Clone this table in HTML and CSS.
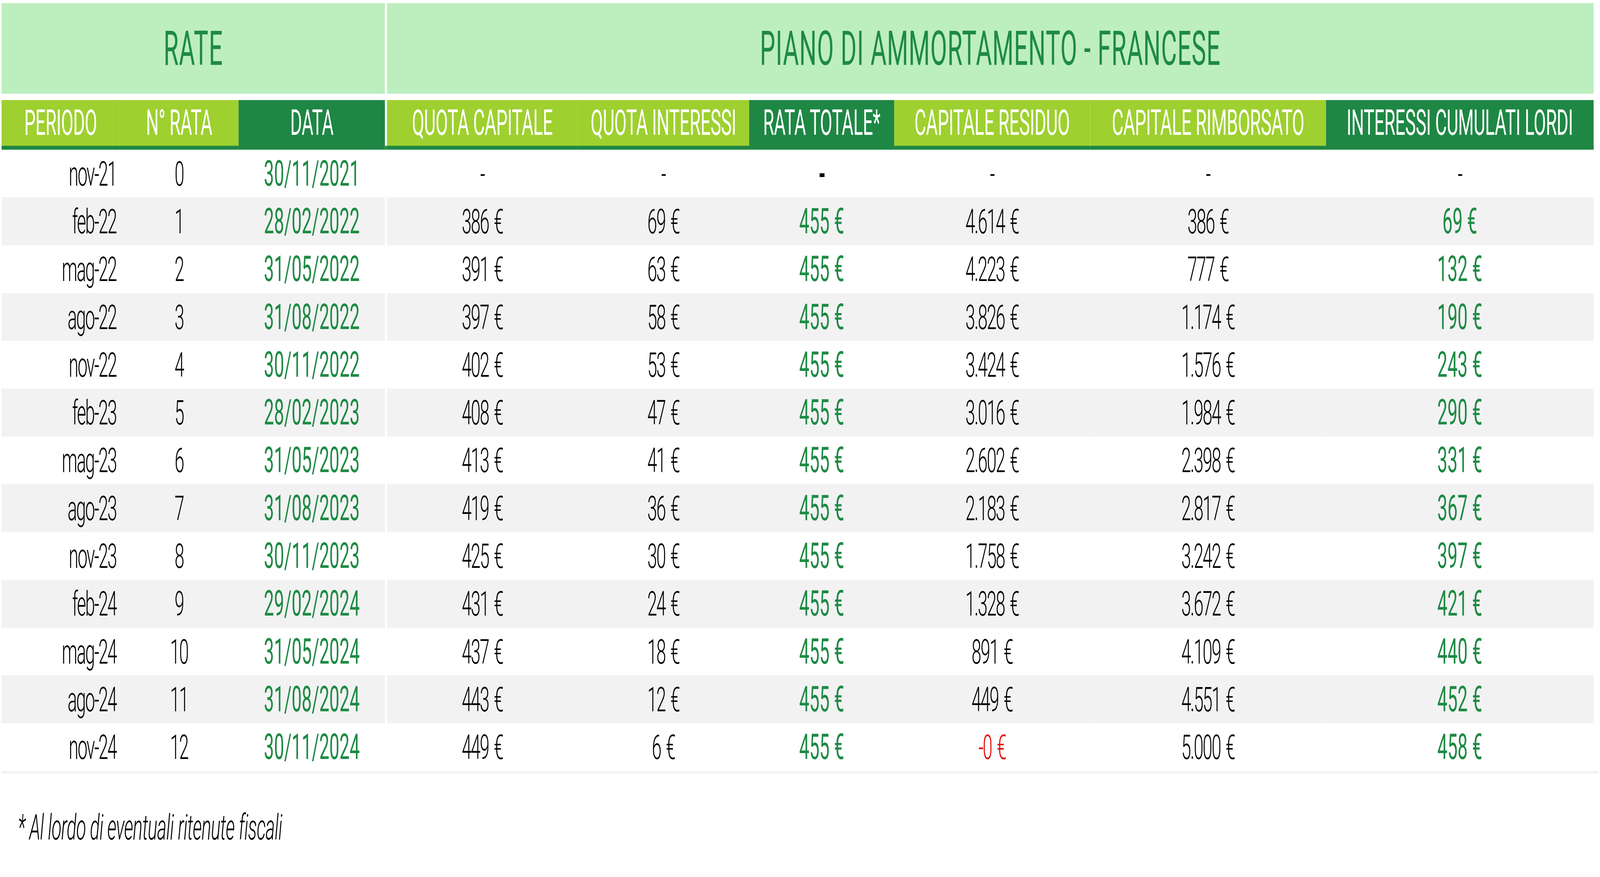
FILE: index.html
```html
<!DOCTYPE html>
<html lang="it">
<head>
<meta charset="utf-8">
<title>Piano di ammortamento</title>
<link rel="stylesheet" href="styles.css">
</head>
<body>
<div class="frame">
<div class="page">
  <div class="grid title-row">
    <div class="title span3">RATE</div>
    <div class="gap"></div>
    <div class="title span6">PIANO DI AMMORTAMENTO - FRANCESE</div>
  </div>
  <div class="grid head-row">
    <div class="h lime">PERIODO</div>
    <div class="h lime">N° RATA</div>
    <div class="h dark">DATA</div>
    <div class="gap hgap"></div>
    <div class="h lime">QUOTA CAPITALE</div>
    <div class="h lime">QUOTA INTERESSI</div>
    <div class="h dark">RATA TOTALE*</div>
    <div class="h lime">CAPITALE RESIDUO</div>
    <div class="h lime">CAPITALE RIMBORSATO</div>
    <div class="h dark">INTERESSI CUMULATI LORDI</div>
  </div>
  <div class="body">
    <div class="grid row"><div class="c per">nov-21</div><div class="c">0</div><div class="c g">30/11/2021</div><div class="gap"></div><div class="c">-</div><div class="c">-</div><div class="c b">-</div><div class="c">-</div><div class="c">-</div><div class="c">-</div></div>
    <div class="grid row"><div class="c per">feb-22</div><div class="c">1</div><div class="c g">28/02/2022</div><div class="gap"></div><div class="c">386 €</div><div class="c">69 €</div><div class="c g">455 €</div><div class="c">4.614 €</div><div class="c">386 €</div><div class="c g">69 €</div></div>
    <div class="grid row"><div class="c per">mag-22</div><div class="c">2</div><div class="c g">31/05/2022</div><div class="gap"></div><div class="c">391 €</div><div class="c">63 €</div><div class="c g">455 €</div><div class="c">4.223 €</div><div class="c">777 €</div><div class="c g">132 €</div></div>
    <div class="grid row"><div class="c per">ago-22</div><div class="c">3</div><div class="c g">31/08/2022</div><div class="gap"></div><div class="c">397 €</div><div class="c">58 €</div><div class="c g">455 €</div><div class="c">3.826 €</div><div class="c">1.174 €</div><div class="c g">190 €</div></div>
    <div class="grid row"><div class="c per">nov-22</div><div class="c">4</div><div class="c g">30/11/2022</div><div class="gap"></div><div class="c">402 €</div><div class="c">53 €</div><div class="c g">455 €</div><div class="c">3.424 €</div><div class="c">1.576 €</div><div class="c g">243 €</div></div>
    <div class="grid row"><div class="c per">feb-23</div><div class="c">5</div><div class="c g">28/02/2023</div><div class="gap"></div><div class="c">408 €</div><div class="c">47 €</div><div class="c g">455 €</div><div class="c">3.016 €</div><div class="c">1.984 €</div><div class="c g">290 €</div></div>
    <div class="grid row"><div class="c per">mag-23</div><div class="c">6</div><div class="c g">31/05/2023</div><div class="gap"></div><div class="c">413 €</div><div class="c">41 €</div><div class="c g">455 €</div><div class="c">2.602 €</div><div class="c">2.398 €</div><div class="c g">331 €</div></div>
    <div class="grid row"><div class="c per">ago-23</div><div class="c">7</div><div class="c g">31/08/2023</div><div class="gap"></div><div class="c">419 €</div><div class="c">36 €</div><div class="c g">455 €</div><div class="c">2.183 €</div><div class="c">2.817 €</div><div class="c g">367 €</div></div>
    <div class="grid row"><div class="c per">nov-23</div><div class="c">8</div><div class="c g">30/11/2023</div><div class="gap"></div><div class="c">425 €</div><div class="c">30 €</div><div class="c g">455 €</div><div class="c">1.758 €</div><div class="c">3.242 €</div><div class="c g">397 €</div></div>
    <div class="grid row"><div class="c per">feb-24</div><div class="c">9</div><div class="c g">29/02/2024</div><div class="gap"></div><div class="c">431 €</div><div class="c">24 €</div><div class="c g">455 €</div><div class="c">1.328 €</div><div class="c">3.672 €</div><div class="c g">421 €</div></div>
    <div class="grid row"><div class="c per">mag-24</div><div class="c">10</div><div class="c g">31/05/2024</div><div class="gap"></div><div class="c">437 €</div><div class="c">18 €</div><div class="c g">455 €</div><div class="c">891 €</div><div class="c">4.109 €</div><div class="c g">440 €</div></div>
    <div class="grid row"><div class="c per">ago-24</div><div class="c">11</div><div class="c g">31/08/2024</div><div class="gap"></div><div class="c">443 €</div><div class="c">12 €</div><div class="c g">455 €</div><div class="c">449 €</div><div class="c">4.551 €</div><div class="c g">452 €</div></div>
    <div class="grid row"><div class="c per">nov-24</div><div class="c">12</div><div class="c g">30/11/2024</div><div class="gap"></div><div class="c">449 €</div><div class="c">6 €</div><div class="c g">455 €</div><div class="c red">-0 €</div><div class="c">5.000 €</div><div class="c g">458 €</div></div>
  </div>
  <div class="endline"></div>
  <p class="note">* Al lordo di eventuali ritenute fiscali</p>
</div>
</div>
</body>
</html>
```

FILE: styles.css
```css
html, body {
  margin: 0;
  padding: 0;
  background: #ffffff;
  overflow: hidden;
}
body {
  font-family: Roboto, "Liberation Sans", Arial, sans-serif;
  color: #000;
}
.frame {
  width: 100vw;
  height: 100vh;
  overflow: clip;
}
.page {
  box-sizing: border-box;
  width: 8000px;
  padding: 8px;
  transform-origin: 0 0;
  transform: scaleX(0.512);
}
@media (min-width: 8000px) {
  .page { transform: none; }
}
.grid {
  display: grid;
  grid-template-columns: 590px 595px 732px 10px 953px 858px 725px 979px 1180px 1338px;
}
.title-row {
  height: 232px;
}
.title {
  background: #bdeebf;
  color: #1e8a44;
  font-size: 122px;
  font-weight: 400;
  letter-spacing: 2px;
  display: flex;
  align-items: center;
  justify-content: center;
  white-space: nowrap;
}
.span3 { grid-column: span 3; }
.span6 { grid-column: span 6; }
.gap { background: #ffffff; }

.head-row {
  margin-top: 16px;
  height: 127px;
}
.h {
  color: #ffffff;
  font-size: 90px;
  font-weight: 400;
  letter-spacing: -1px;
  display: flex;
  align-items: center;
  justify-content: center;
  border-bottom: 10px solid #1e8744;
  white-space: nowrap;
}
.hgap { border-bottom: 10px solid #1e8744; }
.lime { background: #9ed02f; }
.dark { background: #1e8744; }

.row {
  height: 122.3px;
}
.c {
  font-size: 88px;
  font-weight: 300;
  letter-spacing: -4px;
  word-spacing: 8px;
  display: flex;
  align-items: center;
  justify-content: center;
  white-space: nowrap;
  background: #ffffff;
}
.body .row:nth-child(even) .c { background: #f2f2f2; }
.c.per {
  justify-content: flex-end;
  padding-right: 16px;
}
.c.g {
  color: #1e8a44;
  font-size: 90px;
  font-weight: 400;
  letter-spacing: 0;
  word-spacing: 0;
}
.c.b { font-weight: 700; }
.c.red { color: #e00000; }

.endline {
  height: 6px;
  background: #f2f2f2;
}
.note {
  margin: 86px 0 0 0;
  padding-left: 82px;
  font-size: 90px;
  font-style: italic;
  font-weight: 300;
  letter-spacing: -1px;
  line-height: normal;
}
```
